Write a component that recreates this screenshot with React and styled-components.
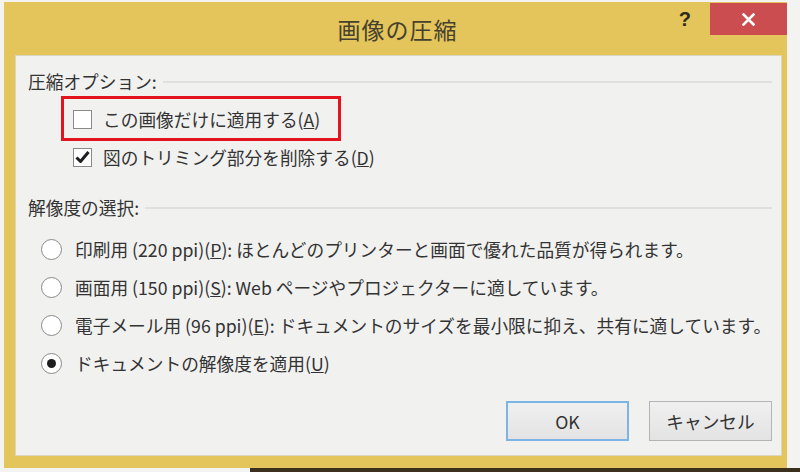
import React from "react";
import styled, { createGlobalStyle } from "styled-components";

const Global = createGlobalStyle`
  html, body { margin: 0; padding: 0; }
  body {
    width: 800px;
    height: 472px;
    overflow: hidden;
    background:
      linear-gradient(to right, transparent 250px, #3b301e 250px) bottom / 100% 4px no-repeat,
      #f3f3f1;
    font-family: "Noto Sans CJK JP", "Noto Sans", sans-serif;
  }
`;

const Page = styled.div`
  padding: 2px 13px 0 4px;
  height: 472px;
  box-sizing: border-box;
`;

const Window = styled.div`
  width: 783px;
  height: 466px;
  background: #e4c55b;
  display: flex;
  flex-direction: column;
`;

const TitleBar = styled.div`
  position: relative;
  height: 53px;
  flex: none;
  display: flex;
  align-items: center;
  justify-content: center;
`;

const Title = styled.div`
  font-size: 23px;
  color: #46412e;
  letter-spacing: 1px;
  padding-left: 4px;
`;

const Help = styled.div`
  position: absolute;
  top: 6px;
  right: 96px;
  font-family: "Liberation Sans", sans-serif;
  font-weight: bold;
  font-size: 20px;
  color: #2e2a1c;
`;

const Close = styled.div`
  position: absolute;
  top: 1px;
  right: 0;
  width: 77px;
  height: 32px;
  background: #cc4d4f;
  display: flex;
  align-items: center;
  justify-content: center;
`;

const Body = styled.div`
  flex: 1;
  margin: 0 5px 12px 11px;
  background: #f1f1f0;
  border: 1px solid #dcd6c0;
  padding: 6px 9px 0 12px;
  display: flex;
  flex-direction: column;
  color: #333;
  font-size: 17.7px;
`;

const GroupHeader = styled.div`
  height: 38px;
  display: flex;
  align-items: center;
  gap: 6px;
  margin-top: ${(p) => p.$mt || 0}px;
  &::after {
    content: "";
    flex: 1;
    height: 0;
    border-top: 2px solid #e0e0df;
    margin-top: 2px;
  }
`;

const Row = styled.div`
  position: relative;
  height: 38px;
  display: flex;
  align-items: center;
  padding-left: ${(p) => p.$indent}px;
  gap: ${(p) => p.$gap}px;
  margin-top: ${(p) => p.$mt || 0}px;
  white-space: nowrap;
`;

const Highlight = styled.div`
  position: absolute;
  left: 33px;
  top: -4px;
  width: 280px;
  height: 45px;
  border: 3px solid #e3141e;
  box-sizing: border-box;
`;

const Box = styled.div`
  width: 19px;
  height: 19px;
  box-sizing: border-box;
  border: 1.5px solid #8a8a8a;
  background: #fff;
  display: flex;
  align-items: center;
  justify-content: center;
  flex: none;
`;

const Radio = styled.div`
  width: 21px;
  height: 21px;
  box-sizing: border-box;
  border-radius: 50%;
  border: 1.5px solid #8a8a8a;
  background: #fff;
  display: flex;
  align-items: center;
  justify-content: center;
  flex: none;
  &::after {
    content: "";
    display: ${(p) => (p.$on ? "block" : "none")};
    width: 9px;
    height: 9px;
    border-radius: 50%;
    background: #1e1e1e;
  }
`;

const Buttons = styled.div`
  display: flex;
  justify-content: flex-end;
  gap: 20px;
  margin-top: 19px;
`;

const Button = styled.div`
  width: 123px;
  height: 40px;
  box-sizing: border-box;
  border: ${(p) => (p.$default ? "2px solid #7db4e6" : "1.5px solid #b4b4b4")};
  background: linear-gradient(#f0f0f0, #e3e3e3);
  display: flex;
  align-items: center;
  justify-content: center;
  font-size: 17.7px;
  color: #333;
`;

const Check = () => (
  <svg width="15" height="14" viewBox="0 0 15 14">
    <path d="M1.5 7.5 L5.5 11.5 L13.5 2" fill="none" stroke="#1e1e1e" strokeWidth="3" strokeLinejoin="round" />
  </svg>
);

const X = () => (
  <svg width="13" height="13" viewBox="0 0 13 13">
    <path d="M1.5 1.5 L11.5 11.5 M11.5 1.5 L1.5 11.5" stroke="#fff" strokeWidth="2.6" strokeLinecap="square" />
  </svg>
);

export default function App() {
  return (
    <>
      <Global />
      <Page>
        <Window>
          <TitleBar>
            <Title>画像の圧縮</Title>
            <Help>?</Help>
            <Close>
              <X />
            </Close>
          </TitleBar>
          <Body>
            <GroupHeader>圧縮オプション:</GroupHeader>
            <Row $indent={45} $gap={11}>
              <Highlight />
              <Box />
              <span>この画像だけに適用する(<u>A</u>)</span>
            </Row>
            <Row $indent={45} $gap={11}>
              <Box>
                <Check />
              </Box>
              <span>図のトリミング部分を削除する(<u>D</u>)</span>
            </Row>
            <GroupHeader $mt={12}>解像度の選択:</GroupHeader>
            <Row $indent={13} $gap={13} $mt={4}>
              <Radio />
              <span>印刷用 (220 ppi)(<u>P</u>): ほとんどのプリンターと画面で優れた品質が得られます。</span>
            </Row>
            <Row $indent={13} $gap={13}>
              <Radio />
              <span>画面用 (150 ppi)(<u>S</u>): Web ページやプロジェクターに適しています。</span>
            </Row>
            <Row $indent={13} $gap={13}>
              <Radio />
              <span>電子メール用 (96 ppi)(<u>E</u>): ドキュメントのサイズを最小限に抑え、共有に適しています。</span>
            </Row>
            <Row $indent={13} $gap={13}>
              <Radio $on />
              <span>ドキュメントの解像度を適用(<u>U</u>)</span>
            </Row>
            <Buttons>
              <Button $default>OK</Button>
              <Button>キャンセル</Button>
            </Buttons>
          </Body>
        </Window>
      </Page>
    </>
  );
}
